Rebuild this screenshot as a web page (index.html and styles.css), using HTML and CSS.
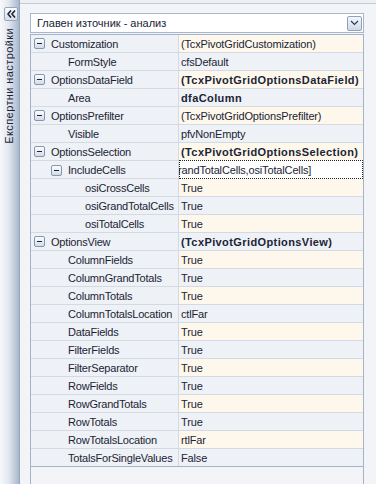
FILE: index.html
```html
<!DOCTYPE html>
<html lang="bg">
<head>
    <meta charset="UTF-8">
    <meta name="viewport" content="width=device-width, initial-scale=1.0">
    <title>Експертни настройки</title>
    <link rel="stylesheet" href="styles.css">
</head>
<body>
    <div class="app">
        <aside class="side">
            <div class="collapse" title="Скрий">
                <svg width="9" height="8" viewBox="0 0 9 8"><path d="M4 0.5 L1 4 L4 7.5 M8 0.5 L5 4 L8 7.5" fill="none" stroke="#1b2436" stroke-width="1.6"/></svg>
            </div>
            <div class="side-title">Експертни настройки</div>
        </aside>
        <main class="panel">
            <div class="combo">
                <span class="combo-text">Главен източник - анализ</span>
                <span class="combo-btn">
                    <svg width="9" height="6" viewBox="0 0 9 6"><path d="M1 1 L4.5 4.5 L8 1" fill="none" stroke="#2b3a52" stroke-width="1.2"/></svg>
                </span>
            </div>
            <div class="inspector">
                <div class="row even"><div class="name"><span class="toggle"></span>Customization</div><div class="value">(TcxPivotGridCustomization)</div></div>
                <div class="row"><div class="name l1"><span class="slot"></span>FormStyle</div><div class="value">cfsDefault</div></div>
                <div class="row even"><div class="name"><span class="toggle"></span>OptionsDataField</div><div class="value mod">(TcxPivotGridOptionsDataField)</div></div>
                <div class="row"><div class="name l1"><span class="slot"></span>Area</div><div class="value mod">dfaColumn</div></div>
                <div class="row even"><div class="name"><span class="toggle"></span>OptionsPrefilter</div><div class="value">(TcxPivotGridOptionsPrefilter)</div></div>
                <div class="row"><div class="name l1"><span class="slot"></span>Visible</div><div class="value">pfvNonEmpty</div></div>
                <div class="row even"><div class="name"><span class="toggle"></span>OptionsSelection</div><div class="value mod">(TcxPivotGridOptionsSelection)</div></div>
                <div class="row"><div class="name l1"><span class="toggle"></span>IncludeCells</div><div class="value editing"><span>randTotalCells,osiTotalCells]</span></div></div>
                <div class="row even"><div class="name l2"><span class="slot"></span>osiCrossCells</div><div class="value">True</div></div>
                <div class="row"><div class="name l2"><span class="slot"></span>osiGrandTotalCells</div><div class="value">True</div></div>
                <div class="row even"><div class="name l2"><span class="slot"></span>osiTotalCells</div><div class="value">True</div></div>
                <div class="row"><div class="name"><span class="toggle"></span>OptionsView</div><div class="value mod">(TcxPivotGridOptionsView)</div></div>
                <div class="row even"><div class="name l1"><span class="slot"></span>ColumnFields</div><div class="value">True</div></div>
                <div class="row"><div class="name l1"><span class="slot"></span>ColumnGrandTotals</div><div class="value">True</div></div>
                <div class="row even"><div class="name l1"><span class="slot"></span>ColumnTotals</div><div class="value">True</div></div>
                <div class="row"><div class="name l1"><span class="slot"></span>ColumnTotalsLocation</div><div class="value">ctlFar</div></div>
                <div class="row even"><div class="name l1"><span class="slot"></span>DataFields</div><div class="value">True</div></div>
                <div class="row"><div class="name l1"><span class="slot"></span>FilterFields</div><div class="value">True</div></div>
                <div class="row even"><div class="name l1"><span class="slot"></span>FilterSeparator</div><div class="value">True</div></div>
                <div class="row"><div class="name l1"><span class="slot"></span>RowFields</div><div class="value">True</div></div>
                <div class="row even"><div class="name l1"><span class="slot"></span>RowGrandTotals</div><div class="value">True</div></div>
                <div class="row"><div class="name l1"><span class="slot"></span>RowTotals</div><div class="value">True</div></div>
                <div class="row even"><div class="name l1"><span class="slot"></span>RowTotalsLocation</div><div class="value">rtlFar</div></div>
                <div class="row last"><div class="name l1"><span class="slot"></span>TotalsForSingleValues</div><div class="value">False</div></div>
            </div>
        </main>
    </div>
</body>
</html>
```

FILE: styles.css
```css
body {
    margin: 0;
    font-family: "Liberation Sans", Arial, sans-serif;
    font-size: 11px;
    color: #1b2436;
    background: #eceff4;
}
.app {
    display: flex;
    height: 484px;
    overflow: hidden;
}
.side {
    width: 19px;
    flex: none;
    border-right: 1px solid #93a5bf;
    background: linear-gradient(to right, #f6f8fb, #e3e8f0 45%, #a9b7cc);
    display: flex;
    flex-direction: column;
    align-items: flex-start;
}
.collapse {
    margin: 7px 0 0 4px;
    width: 14px;
    height: 14px;
    box-sizing: border-box;
    border: 1px solid #97a8c0;
    border-radius: 2px;
    background: linear-gradient(#fbfcfe, #d6dee9);
    display: flex;
    align-items: center;
    justify-content: center;
}
.side-title {
    margin: 7px 0 0 3px;
    writing-mode: vertical-rl;
    transform: rotate(180deg);
    white-space: nowrap;
    letter-spacing: 0.4px;
    color: #1b2436;
}
.panel {
    flex: 1;
    margin-top: 3px;
    border-top: 1px solid #c3ccd9;
    background: #f2f4f8;
    padding: 9px 12px 0 10px;
    display: flex;
    flex-direction: column;
}
.combo {
    height: 20px;
    box-sizing: border-box;
    border: 1px solid #a7b6cb;
    background: #fff;
    display: flex;
    align-items: center;
    padding-left: 6px;
}
.combo-btn {
    margin-left: auto;
    margin-right: 1px;
    width: 15px;
    height: 15px;
    box-sizing: border-box;
    border: 1px solid #8fa2bd;
    border-radius: 2px;
    background: linear-gradient(#f4f7fb, #cfd9e7);
    display: flex;
    align-items: center;
    justify-content: center;
}
.inspector {
    flex: 1;
    margin-top: 1px;
    border: 1px solid #a3b3ca;
    border-bottom: none;
    background: #f2f4f8;
}
.row {
    display: grid;
    grid-template-columns: 148px 1fr;
    height: 18px;
    box-sizing: border-box;
    border-bottom: 1px solid #d3dae4;
    background: #eef1f5;
}
.row.last {
    border-bottom-color: #a3b3ca;
}
.name {
    display: flex;
    align-items: center;
    padding-left: 3px;
    border-right: 1px solid #d3dae4;
    white-space: nowrap;
    letter-spacing: -0.2px;
    overflow: hidden;
}
.name.l1 {
    padding-left: 20px;
}
.name.l2 {
    padding-left: 37px;
}
.slot, .toggle {
    flex: none;
    width: 17px;
    height: 11px;
}
.toggle {
    position: relative;
}
.toggle::before {
    content: "";
    position: absolute;
    left: 0;
    top: 0;
    width: 11px;
    height: 11px;
    box-sizing: border-box;
    border: 1px solid #8496b1;
    border-radius: 2px;
    background: linear-gradient(#fdfdfe, #d3dbe6);
}
.toggle::after {
    content: "";
    position: absolute;
    left: 3px;
    top: 5px;
    width: 5px;
    height: 1px;
    background: #1b2436;
}
.value {
    display: flex;
    align-items: center;
    padding-left: 2px;
    white-space: nowrap;
    letter-spacing: -0.15px;
    overflow: hidden;
}
.row.even .value {
    background: #fdf8eb;
}
.value.mod {
    font-weight: bold;
    letter-spacing: 0.4px;
}
.value.editing {
    background: #fff;
    outline: 1px dotted #222;
    outline-offset: -1px;
    margin-top: -1px;
    height: 19px;
}
.value.editing span {
    margin-left: -3px;
}
```
